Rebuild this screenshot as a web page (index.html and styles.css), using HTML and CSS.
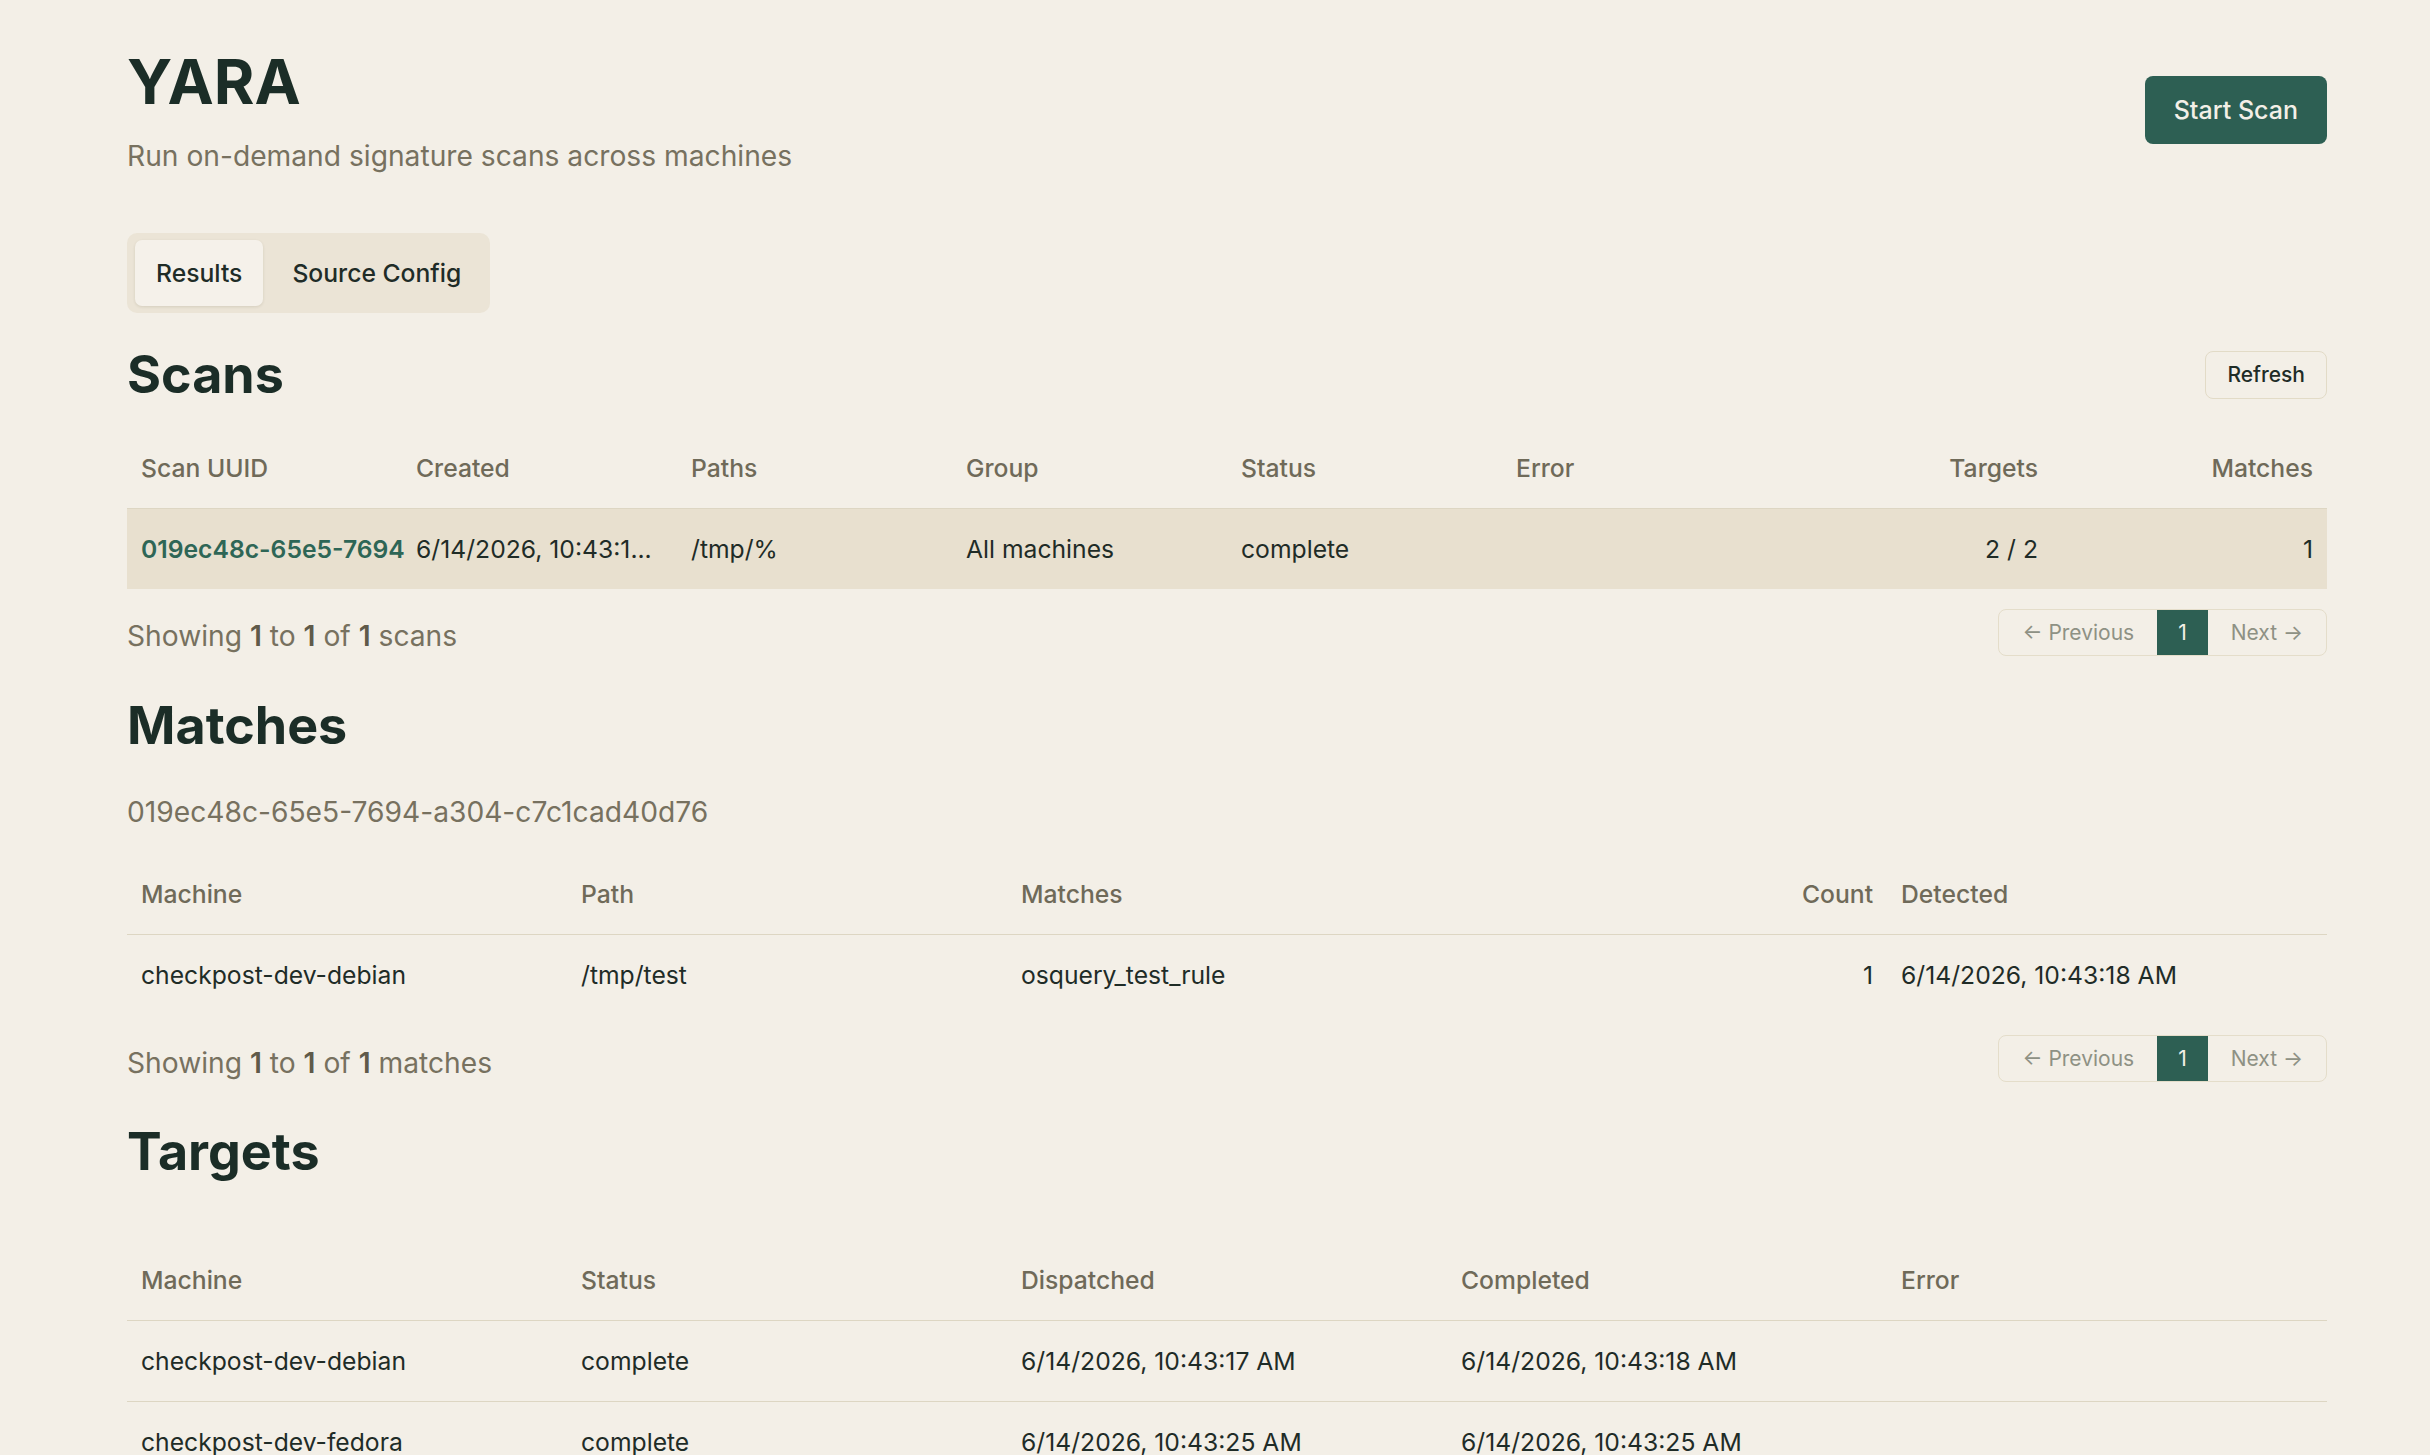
FILE: index.html
```html
<!DOCTYPE html>
<html lang="en">
  <head>
    <meta charset="UTF-8" />
    <title>YARA</title>
    <link rel="stylesheet" href="styles.css">
  </head>
  <body>
    <div class="page">
      <div class="page-header">
        <div>
          <h1 class="title">YARA</h1>
          <p class="subtitle">Run on-demand signature scans across machines</p>
        </div>
        <button class="btn-primary">Start Scan</button>
      </div>

      <div class="tabs">
        <div class="tab active">Results</div>
        <div class="tab">Source Config</div>
      </div>

      <!-- scans -->
      <div class="section first">
        <div class="section-head">
          <h2>Scans</h2>
          <button class="btn-small">Refresh</button>
        </div>
        <table class="grid scans">
          <thead>
            <tr>
              <th>Scan UUID</th>
              <th>Created</th>
              <th>Paths</th>
              <th>Group</th>
              <th>Status</th>
              <th>Error</th>
              <th class="num">Targets</th>
              <th class="num">Matches</th>
            </tr>
          </thead>
          <tbody>
            <tr class="selected">
              <td class="uuid">019ec48c-65e5-7694</td>
              <td class="clip" title="6/14/2026, 10:43:18 AM">6/14/2026, 10:43:1...</td>
              <td>/tmp/%</td>
              <td>All machines</td>
              <td>complete</td>
              <td></td>
              <td class="num">2 / 2</td>
              <td class="num">1</td>
            </tr>
          </tbody>
        </table>
        <div class="table-foot">
          <div class="showing">Showing <b>1</b> to <b>1</b> of <b>1</b> scans</div>
          <div class="pager">
            <span class="pg disabled">&larr; Previous</span>
            <span class="pg current">1</span>
            <span class="pg disabled">Next &rarr;</span>
          </div>
        </div>
      </div>

      <!-- matches -->
      <div class="section">
        <div class="section-head">
          <h2>Matches</h2>
        </div>
        <p class="scan-id">019ec48c-65e5-7694-a304-c7c1cad40d76</p>
        <table class="grid matches">
          <colgroup>
            <col class="w20" />
            <col class="w20" />
            <col />
            <col class="w-count" />
            <col class="w20" />
          </colgroup>
          <thead>
            <tr>
              <th>Machine</th>
              <th>Path</th>
              <th>Matches</th>
              <th class="num">Count</th>
              <th>Detected</th>
            </tr>
          </thead>
          <tbody>
            <tr>
              <td>checkpost-dev-debian</td>
              <td>/tmp/test</td>
              <td>osquery_test_rule</td>
              <td class="num">1</td>
              <td>6/14/2026, 10:43:18 AM</td>
            </tr>
          </tbody>
        </table>
        <div class="table-foot">
          <div class="showing">Showing <b>1</b> to <b>1</b> of <b>1</b> matches</div>
          <div class="pager">
            <span class="pg disabled">&larr; Previous</span>
            <span class="pg current">1</span>
            <span class="pg disabled">Next &rarr;</span>
          </div>
        </div>
      </div>

      <!-- targets -->
      <div class="section">
        <div class="section-head">
          <h2>Targets</h2>
        </div>
        <table class="grid targets">
          <thead>
            <tr>
              <th>Machine</th>
              <th>Status</th>
              <th>Dispatched</th>
              <th>Completed</th>
              <th>Error</th>
            </tr>
          </thead>
          <tbody>
            <tr>
              <td>checkpost-dev-debian</td>
              <td>complete</td>
              <td>6/14/2026, 10:43:17 AM</td>
              <td>6/14/2026, 10:43:18 AM</td>
              <td></td>
            </tr>
            <tr>
              <td>checkpost-dev-fedora</td>
              <td>complete</td>
              <td>6/14/2026, 10:43:25 AM</td>
              <td>6/14/2026, 10:43:25 AM</td>
              <td></td>
            </tr>
          </tbody>
        </table>
      </div>
    </div>
  </body>
</html>
```

FILE: styles.css
```css
body {
  margin: 0;
  background: #f3efe7;
  color: #1f2c27;
  font-family: Inter, "Noto Sans", sans-serif;
}
.page {
  width: 2200px;
  margin-left: 127px;
  padding: 43.5px 0 60px;
}
.page-header {
  display: flex;
  justify-content: space-between;
  align-items: center;
}
.title {
  margin: 0;
  font-size: 62px;
  line-height: 76px;
  font-weight: 700;
  color: #1b2d27;
}
.subtitle {
  margin: 16px 0 0;
  font-size: 28.2px;
  line-height: 40px;
  color: #77715f;
}
.btn-primary {
  font-family: inherit;
  font-size: 25px;
  font-weight: 500;
  line-height: 36px;
  padding: 16px 29px;
  border: 0;
  border-radius: 8px;
  background: #2d5f53;
  color: #f3efe7;
}
.tabs {
  display: inline-flex;
  gap: 8px;
  margin-top: 57px;
  padding: 7px 8px;
  background: #ebe4d6;
  border-radius: 10px;
}
.tab {
  font-size: 24.7px;
  font-weight: 500;
  line-height: 36px;
  padding: 15px 21px;
  border-radius: 7px;
  color: #1f2c27;
}
.tab.active {
  background: #f5f1ea;
  box-shadow: 0 1px 3px rgba(60, 50, 20, 0.12);
}
.section {
  margin-top: 39px;
}
.section.first {
  margin-top: 31px;
}
.section-head {
  display: flex;
  justify-content: space-between;
  align-items: center;
}
.section-head h2 {
  margin: 0;
  font-size: 52px;
  line-height: 62px;
  font-weight: 700;
  color: #1b2d27;
}
.btn-small {
  font-family: inherit;
  font-size: 21px;
  font-weight: 500;
  line-height: 30px;
  padding: 8px 21px;
  border: 1.5px solid #e2dbc7;
  border-radius: 8px;
  background: #f3efe7;
  color: #1f2c27;
}
.scan-id {
  margin: 35.5px 0 0;
  font-size: 28.2px;
  line-height: 40px;
  color: #77715f;
}
.grid {
  width: 100%;
  table-layout: fixed;
  border-collapse: collapse;
  margin-top: 22px;
  font-size: 24.7px;
  line-height: 36px;
}
.targets {
  margin-top: 57px;
}
.grid th {
  text-align: left;
  font-weight: 500;
  color: #6f6a59;
  padding: 22px 14px;
  border-bottom: 1px solid #ddd6c3;
}
.grid td {
  padding: 22px 14px;
  white-space: nowrap;
}
.grid tbody tr:not(:last-child) td {
  border-bottom: 1px solid #ddd6c3;
}
.grid .num {
  text-align: right;
}
.w20 {
  width: 20%;
}
.w-count {
  width: 99px;
}
.selected td {
  background: #e8e0cf;
}
.uuid {
  color: #2e6656;
  font-weight: 600;
  overflow: visible;
}
.clip {
  overflow: hidden;
}
.table-foot {
  display: flex;
  justify-content: space-between;
  align-items: center;
  margin-top: 20px;
}
.showing {
  font-size: 28.2px;
  color: #77715f;
  padding-top: 8px;
}
.showing b {
  font-weight: 600;
  color: #5f5a4a;
}
.pager {
  display: flex;
  border: 1.5px solid #e4ddca;
  border-radius: 8px;
  overflow: hidden;
  font-size: 21px;
  line-height: 45px;
}
.pg {
  padding: 0 23px;
}
.pg.disabled {
  color: #8e9184;
}
.pg.current {
  background: #2d5f53;
  color: #f3efe7;
  padding: 0 21px;
}
```
